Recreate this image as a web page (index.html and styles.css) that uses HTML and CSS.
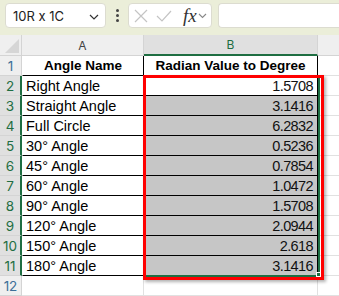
FILE: index.html
```html
<!DOCTYPE html>
<html>
<head>
<meta charset="utf-8">
<link rel="stylesheet" href="styles.css">
</head>
<body>
<div class="toolbar">
  <div class="namebox"><span>10R x 1C</span>
    <svg class="chev" width="10" height="6" viewBox="0 0 10 6"><path d="M1 1 L5 5 L9 1" fill="none" stroke="#333" stroke-width="1.2"/></svg>
  </div>
  <div class="dots"><i></i><i></i><i></i></div>
  <div class="fbox">
    <svg width="14" height="14" viewBox="0 0 14 14"><path d="M1 1 L13 13 M13 1 L1 13" stroke="#c4c4c4" stroke-width="1.2" fill="none"/></svg>
    <svg width="16" height="12" viewBox="0 0 16 12"><path d="M1 6 L6 11 L15 1" stroke="#c4c4c4" stroke-width="1.2" fill="none"/></svg>
    <span class="fx">fx</span>
    <svg width="9" height="6" viewBox="0 0 9 6"><path d="M1 1 L4.5 4.5 L8 1" fill="none" stroke="#888" stroke-width="1.1"/></svg>
  </div>
  <div class="finput"></div>
</div>
<div class="sheet">
  <div class="corner"><svg width="14" height="14" viewBox="0 0 14 14"><path d="M14 0 L14 14 L0 14 Z" fill="#d6d6d6"/></svg></div>
  <div class="colh">A</div>
  <div class="colh sel">B</div>
  <div class="colh last"></div>

  <div class="rowh">1</div>
  <div class="cell a hd">Angle Name</div>
  <div class="cell b hd">Radian Value to Degree</div>
  <div class="cell c"></div>

  <div class="rowh sel">2</div>
  <div class="cell a">Right Angle</div>
  <div class="cell b active">1.5708</div>
  <div class="cell c"></div>

  <div class="rowh sel">3</div>
  <div class="cell a">Straight Angle</div>
  <div class="cell b">3.1416</div>
  <div class="cell c"></div>

  <div class="rowh sel">4</div>
  <div class="cell a">Full Circle</div>
  <div class="cell b">6.2832</div>
  <div class="cell c"></div>

  <div class="rowh sel">5</div>
  <div class="cell a">30° Angle</div>
  <div class="cell b">0.5236</div>
  <div class="cell c"></div>

  <div class="rowh sel">6</div>
  <div class="cell a">45° Angle</div>
  <div class="cell b">0.7854</div>
  <div class="cell c"></div>

  <div class="rowh sel">7</div>
  <div class="cell a">60° Angle</div>
  <div class="cell b">1.0472</div>
  <div class="cell c"></div>

  <div class="rowh sel">8</div>
  <div class="cell a">90° Angle</div>
  <div class="cell b">1.5708</div>
  <div class="cell c"></div>

  <div class="rowh sel">9</div>
  <div class="cell a">120° Angle</div>
  <div class="cell b">2.0944</div>
  <div class="cell c"></div>

  <div class="rowh sel">10</div>
  <div class="cell a">150° Angle</div>
  <div class="cell b">2.618</div>
  <div class="cell c"></div>

  <div class="rowh sel">11</div>
  <div class="cell a">180° Angle</div>
  <div class="cell b">3.1416</div>
  <div class="cell c"></div>

  <div class="rowh">12</div>
  <div class="cell e"></div>
  <div class="cell e"></div>
  <div class="cell c"></div>

  <div class="redbox"><div class="handle"></div></div>
</div>
</body>
</html>
```
FILE: styles.css
```css
* { box-sizing: border-box; }
html, body { margin: 0; padding: 0; background: #fff; overflow: hidden; }
body { width: 339px; height: 296px; font-family: "Liberation Sans", Arial, sans-serif; }

.toolbar {
  height: 35px;
  background: #ebeed9;
  display: flex;
  align-items: flex-start;
  padding: 3px 0 0 5px;
}
.namebox {
  width: 101px; height: 25px;
  background: #fff;
  border: 1px solid #dcdcd0;
  border-radius: 4px;
  display: flex; align-items: center; justify-content: space-between;
  padding: 0 6px 0 7px;
  font-family: Inter, "Liberation Sans", sans-serif;
  font-size: 13px; color: #222;
}
.namebox .chev { margin-top: 2px; }
.dots {
  width: 22px; height: 25px;
  display: flex; flex-direction: column; align-items: center; justify-content: center; gap: 2px;
}
.dots i { display: block; width: 3px; height: 3px; background: #444; border-radius: 50%; }
.fbox {
  width: 84px; height: 25px;
  background: #fff;
  border: 1px solid #dcdcd0;
  border-radius: 4px;
  display: flex; align-items: center;
  padding: 0 0 0 5px;
  gap: 8px;
}
.fbox .fx {
  font-family: "Liberation Serif", "DejaVu Serif", serif;
  font-style: italic; font-size: 19px; color: #333;
  margin-left: 3px; margin-right: -7px;
  line-height: 1;
}
.finput {
  margin-left: 6px;
  flex: 1; height: 25px;
  background: #fff;
  border: 1px solid #dcdcd0;
  border-right: none;
  border-radius: 4px 0 0 4px;
}

.sheet {
  position: relative;
  display: grid;
  grid-template-columns: 22px 122px 174px 21px;
  grid-template-rows: 21px repeat(12, 20px);
}
.corner {
  background: #efefef;
  border-right: 1px solid #d4d4d4;
  border-bottom: 1px solid #d4d4d4;
  display: flex; align-items: flex-end; justify-content: flex-end;
  padding: 0 2px 2px 0;
}
.colh {
  background: #efefef;
  border-right: 1px solid #d4d4d4;
  border-bottom: 1px solid #d4d4d4;
  display: flex; align-items: center; justify-content: center;
  font-family: Inter, "Liberation Sans", sans-serif;
  font-size: 12px; color: #444;
}
.colh.sel { background: #e0e0e0; border-bottom: 2px solid #1e6e42; color: #1e6e42; }
.colh.last { border-right: none; }
.rowh {
  background: #efefef;
  border-right: 1px solid #d4d4d4;
  border-bottom: 1px solid #d4d4d4;
  display: flex; align-items: center; justify-content: center;
  font-family: Inter, "Liberation Sans", sans-serif;
  font-size: 13.5px; color: #3d6f98;
}
.rowh.sel { background: #e0e0e0; color: #1e6e42; border-right: 2px solid #1e6e42; }
.cell {
  border-right: 1px solid #e1e1e1;
  border-bottom: 1px solid #e1e1e1;
  font-size: 14.5px; color: #000;
  display: flex; align-items: center;
  white-space: nowrap; overflow: hidden;
  padding: 0 3px;
}
.cell.a { border-right: 1px solid #000; border-bottom: 1px solid #000; border-left: 1px solid transparent; }
.cell.b {
  background: #c6c6c6;
  border-right: 1px solid #000; border-bottom: 1px solid #000;
  justify-content: flex-end;
  padding-right: 4px;
  font-size: 14.5px;
  letter-spacing: -0.6px;
  color: #111;
}
.cell.b.active { background: #fff; }
.cell.hd {
  background: #fff;
  font-family: "Liberation Sans", Arial, sans-serif;
  font-weight: bold;
  font-size: 13.5px;
  letter-spacing: 0;
  color: #000;
  justify-content: center;
  padding: 0;
}
.cell.c { border-right: none; }

.redbox {
  position: absolute;
  left: 143px; top: 40px;
  width: 181px; height: 205px;
  border: 3px solid #f00;
  box-shadow: 2px 2px 3px rgba(0,0,0,0.3);
  pointer-events: none;
}
.redbox::before {
  content: "";
  position: absolute;
  left: 0; top: 0; right: 1px; bottom: 0;
  border-right: 2px solid #1e6e42;
  border-bottom: 2px solid #1e6e42;
}
.handle {
  position: absolute;
  right: 0; bottom: 0;
  width: 5px; height: 5px;
  background: #1e6e42;
  border: 1px solid #fff;
}
```
